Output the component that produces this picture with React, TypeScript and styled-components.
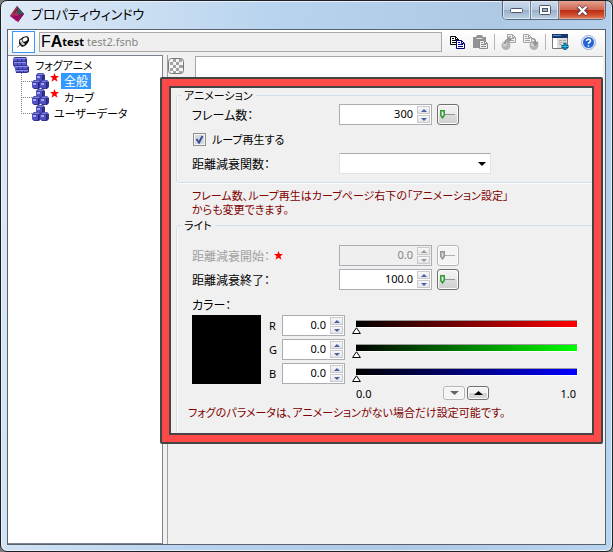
import React from "react";
import styled, { createGlobalStyle, css } from "styled-components";

const GlobalStyle = createGlobalStyle`
  *, *::before, *::after { box-sizing: border-box; }
  html, body { margin: 0; background: #7d7d7d; }
  body, button, input, select {
    font-family: "Noto Sans", "Noto Sans CJK JP", sans-serif;
    font-size: 12px;
    line-height: 16px;
    color: #000;
  }
  body { font-family: "Noto Sans CJK JP", sans-serif; font-feature-settings: "palt"; }
  button { padding: 0; cursor: default; }
  svg { display: block; flex: none; }
`;

const Window = styled.div`
  display: flex;
  flex-direction: column;
  min-height: 100vh;
  padding: 0 6px 6px;
  border: 1px solid #1c1f24;
  border-radius: 7px;
  background: linear-gradient(100deg, #dfeaf7 0, #b7d3ee 40%, #adc9e4 70%, #b9d4ee 100%);
  box-shadow: inset 0 0 0 1px #e6f1fb;
`;

const TitleBar = styled.header`
  display: flex;
  align-items: flex-start;
  height: 28px;
`;

const Title = styled.h1`
  display: flex;
  align-items: center;
  gap: 6px;
  flex: 1;
  margin: 0;
  padding-left: 2px;
  height: 26px;
  font-size: 13px;
  font-weight: 400;
  white-space: nowrap;
`;

const Caption = styled.div`
  display: flex;
  border: 1px solid #56667c;
  border-top: 0;
  border-radius: 0 0 5px 5px;
  overflow: hidden;
`;

const CaptionButton = styled.button<{ $close?: boolean }>`
  display: grid;
  place-items: center;
  width: ${(p) => (p.$close ? 46 : 28)}px;
  height: 18px;
  border: 0;
  border-right: ${(p) => (p.$close ? "0" : "1px solid #6d7d92")};
  box-shadow: inset 0 0 0 1px ${(p) => (p.$close ? "#e7a392" : "#dbe7f3")};
  background: ${(p) =>
    p.$close
      ? "linear-gradient(#e3a191 0, #cf6650 48%, #b92a14 50%, #d0512f 80%, #e08564 100%)"
      : "linear-gradient(#cddcec 0, #b5c8dd 48%, #98afc8 50%, #bdd2e6 100%)"};
`;

const Client = styled.main`
  display: flex;
  flex-direction: column;
  flex: 1;
  border: 1px solid #59616c;
  background: #f0f0f0;
`;

const Toolbar = styled.div`
  display: flex;
  align-items: center;
  gap: 6px;
  height: 25px;
  padding: 0 9px 1px 4px;
  background: linear-gradient(#ffffff, #efefef);
`;

const ToolButton = styled.button`
  display: grid;
  place-items: center;
  width: 16px;
  height: 20px;
  border: 0;
  background: none;
`;

const HelpButton = styled(ToolButton)`
  margin-left: 6px;
`;

const PinButton = styled(ToolButton)`
  width: 23px;
  height: 22px;
  border: 1px solid #3399ff;
  background: #fff;
`;

const PathField = styled.div`
  display: flex;
  align-items: center;
  flex: 1;
  min-width: 0;
  height: 20px;
  margin: 0 2px 0 -2px;
  padding-left: 1px;
  border: 1px solid #a9a9a9;
  background: #efefef;
  font-family: "Noto Sans", sans-serif;
  font-size: 11px;
  color: #858585;
  white-space: nowrap;

  strong { margin-right: 3px; color: #000; }
`;

const FileMark = styled.span`
  font-family: "Liberation Sans", sans-serif;
  font-size: 16px;
  line-height: 18px;
  color: #000;
`;

const Separator = styled.span`
  width: 1px;
  height: 16px;
  background: #b5b5b5;
`;

const Body = styled.div`
  display: grid;
  grid-template-columns: 155px minmax(0, 1fr);
  gap: 4px;
  flex: 1;
`;

const Tree = styled.nav`
  padding: 1px 0 0 5px;
  border: solid #7c8490;
  border-width: 1px 1px 1px 0;
  background: #fff;

  ul { margin: 0; padding: 0; list-style: none; }
`;

const TreeItem = styled.a`
  display: flex;
  align-items: center;
  height: 16px;
  color: #000;
  text-decoration: none;
  white-space: nowrap;
`;

const TreeChildren = styled.ul`
  && { padding-left: 8px; }

  li {
    display: flex;
    align-items: center;
  }
  li::before {
    content: "";
    align-self: flex-start;
    width: 11px;
    height: 9px;
    border: dotted #808080;
    border-width: 0 0 1px 1px;
  }
  li:not(:last-child) {
    background: linear-gradient(#808080 50%, #fff 50%) 0 0 / 1px 2px repeat-y;
  }
`;

const StarSlot = styled.span`
  align-self: flex-start;
  padding-left: 1px;
`;

const TreeLabel = styled.span<{ $selected?: boolean }>`
  margin-left: 2px;
  padding: 0 3px;
  font-size: 11px;
  ${(p) =>
    p.$selected &&
    css`
      background: #3399ff;
      color: #fff;
      font-size: 12px;
    `}
`;

const Pane = styled.section`
  min-width: 0;
  border-left: 1px solid #a0a0a0;
`;

const PaneHeader = styled.div`
  display: flex;
  align-items: center;
  gap: 11px;
  height: 22px;
  padding-right: 2px;
`;

const HeaderStrip = styled.div`
  align-self: stretch;
  flex: 1;
  margin-top: 1px;
  border: solid #a5a7aa;
  border-width: 1px 0 0 1px;
  background: #fff;
`;

const Page = styled.form`
  position: relative;
  padding: 10px 7px 6px 8px;
`;

const Highlight = styled.div`
  position: absolute;
  inset: 0 2px 0 -8px;
  border: 2px solid #444444;
  border-radius: 2px;
  pointer-events: none;

  &::before, &::after { content: ""; position: absolute; }
  &::before { inset: 0; border: 7px solid rgba(255, 64, 64, 0.95); }
  &::after { inset: 7px; border: 2px solid #444444; }
`;

const Group = styled.fieldset<{ $top: number; $gap: number; $bottom: number }>`
  display: flex;
  flex-direction: column;
  gap: ${(p) => p.$gap}px;
  min-width: 0;
  margin: 0;
  padding: ${(p) => p.$top}px 15px ${(p) => p.$bottom}px;
  border: 1px solid #d3dee6;
  border-radius: 3px;
  box-shadow: inset 1px 0 #fafcfd, 0 1px #fafcfd;

  legend { margin-left: -11px; padding: 0 3px; height: 16px; font-size: 11px; }
`;

const Row = styled.div`
  display: grid;
  grid-template-columns: 147px auto 1fr;
  align-items: center;
  min-height: 21px;
`;

const RowLabel = styled.label<{ $muted?: boolean }>`
  display: flex;
  align-items: center;
  gap: 4px;
  color: ${(p) => (p.$muted ? "#a0a0a0" : "#000")};
`;

const CheckLabel = styled.label`
  display: flex;
  align-items: center;
  gap: 6px;
  height: 16px;
  padding-left: 1px;
  font-size: 11px;
`;

const CheckBox = styled.input`
  appearance: none;
  width: 13px;
  height: 13px;
  margin: 0;
  border: 1px solid #8e8f8f;
  box-shadow: inset 0 0 0 1px #f4f4f4;
  background: #d3d8e0;

  &:checked {
    background: url("data:image/svg+xml,%3Csvg xmlns='http://www.w3.org/2000/svg' viewBox='0 0 11 11'%3E%3Cpath d='M2.5 5l2.500 3.500L8.500 2' fill='none' stroke='%233a4f94' stroke-width='2'/%3E%3C/svg%3E")
      center / 11px 11px no-repeat #d3d8e0;
  }
`;

const SpinBox = styled.span<{ $width: number; $muted?: boolean }>`
  display: flex;
  width: ${(p) => p.$width}px;
  height: 21px;
  padding: 1px;
  border: 1px solid #abadb3;
  background: ${(p) => (p.$muted ? "#efefef" : "#fff")};

  input {
    flex: 1;
    min-width: 0;
    padding: 0 4px 1px 0;
    border: 0;
    background: none;
    text-align: right;
    font-size: 11px;
    color: ${(p) => (p.$muted ? "#858585" : "#000")};
  }
`;

const SpinButtons = styled.span`
  display: grid;
  grid-template-rows: 1fr 1fr;
  gap: 1px;
  width: 13px;
`;

const SpinButton = styled.button`
  display: grid;
  place-items: center;
  border: 1px solid #c9cace;
  background: linear-gradient(#f8f8f8, #e4e4e4);
`;

const KeyButton = styled.button`
  display: grid;
  place-items: center start;
  width: 22px;
  height: 21px;
  margin-left: 5px;
  padding-left: 2px;
  border: 1px solid #707070;
  border-radius: 3px;
  box-shadow: inset 0 0 0 1px #fbfbfb;
  background: linear-gradient(#f2f2f2 0, #ebebeb 50%, #dddddd 50%, #cfcfcf 100%);

  &:disabled { border-color: #b4b7b9; background: #f4f4f4; }
`;

const Combo = styled.select`
  appearance: none;
  width: 152px;
  height: 21px;
  border: 1px solid #e2e3ea;
  border-top-color: #abadb3;
  border-radius: 1px;
  background: url("data:image/svg+xml,%3Csvg xmlns='http://www.w3.org/2000/svg' viewBox='0 0 8 4'%3E%3Cpath d='M0 0h8L4 4z'/%3E%3C/svg%3E")
    right 4px center / 8px 4px no-repeat #fff;
`;

const Note = styled.p<{ $inset: number; $top: number }>`
  margin: ${(p) => p.$top}px 0 1px ${(p) => p.$inset}px;
  font-size: 11px;
  line-height: 14px;
  color: #800000;
`;

const ColorHeading = styled.div`
  height: 16px;
  margin-top: 4px;
`;

const ColorEditor = styled.div`
  display: grid;
  grid-template-columns: 69px minmax(0, 1fr);
  column-gap: 8px;
  margin-top: -1px;
`;

const Swatch = styled.button`
  width: 69px;
  height: 69px;
  border: 0;
  background: #000;
`;

const Channels = styled.div`
  display: grid;
  gap: 3px;
`;

const Channel = styled.div`
  display: grid;
  grid-template-columns: 13px 63px minmax(0, 1fr);
  height: 21px;

  label { font-family: "Noto Sans", sans-serif; font-size: 11px; line-height: 22px; }
`;

const Slider = styled.input<{ $color: string }>`
  appearance: none;
  height: 21px;
  margin: 0 0 0 7px;
  background:
    linear-gradient(#9b9b9b, #9b9b9b) 4px 5px / calc(100% - 9px) 1px no-repeat,
    linear-gradient(90deg, #000, ${(p) => p.$color}) 4px 6px / calc(100% - 9px) 6px no-repeat,
    linear-gradient(#fff, #fff) 4px 6px / calc(100% - 8px) 7px no-repeat;

  &::-webkit-slider-runnable-track { height: 21px; padding-top: 12px; }
  &::-webkit-slider-thumb {
    appearance: none;
    width: 9px;
    height: 7px;
    background: url("data:image/svg+xml,%3Csvg xmlns='http://www.w3.org/2000/svg' viewBox='0 0 9 7'%3E%3Cpath d='M4.5 .8L8.4 6.5H.6z' fill='%23fff' stroke='%23000'/%3E%3C/svg%3E") no-repeat;
  }
`;

const Scale = styled.div`
  display: flex;
  align-items: center;
  justify-content: space-between;
  grid-column: 2;
  min-height: 17px;
  margin: 1px 6px 0 87px;
`;

const RangeButtons = styled.span`
  display: flex;
  gap: 2px;
  margin-bottom: 2px;
`;

const RangeButton = styled.button`
  display: grid;
  place-items: center;
  width: 22px;
  height: 14px;
  border: 1px solid #707070;
  border-radius: 3px;
  box-shadow: inset 0 0 0 1px #fbfbfb;
  background: linear-gradient(#f2f2f2 50%, #d5d5d5 50%);

  &:disabled { border-color: #b4b7b9; background: #f4f4f4; }
`;

const ScaleText = styled.span`
  font-family: "Noto Sans", sans-serif;
  font-size: 11px;
`;

function Star() {
  return (
    <svg width="9" height="9" viewBox="0 0 9 9">
      <path d="M4.5 0L5.7 3H9L6.4 5.2 7.5 8.8 4.5 6.8 1.5 8.8 2.6 5.2 0 3h3.3z" fill="#ff0000" />
    </svg>
  );
}

function TreeStar() {
  return <StarSlot><Star /></StarSlot>;
}

function Arrow({ up, width = 6, color = "#4a5fa5" }: { up?: boolean; width?: number; color?: string }) {
  return (
    <svg width={width} height={Math.floor(width / 2)} viewBox="0 0 6 3" preserveAspectRatio="none">
      <path d={up ? "M3 0L6 3H0z" : "M0 0H6L3 3z"} fill={color} />
    </svg>
  );
}

const cubeSpots = [
  [4, 0],
  [0, 7],
  [8, 7],
];

function CubesIcon() {
  return (
    <svg width="17" height="16" viewBox="0 0 17 16">
      {cubeSpots.map(([x, y]) => (
        <g key={`${x}-${y}`} transform={`translate(${x} ${y})`}>
          <path d="M0 2L2 0H7L9 2V7L7 9H2L0 7z" fill="#34348f" />
          <path d="M0 2.500H6V8H2L0 7z" fill="#4f4fc6" />
          <path d="M1 2L3 .5H7L7.500 2z" fill="#7c7cdf" />
          <path d="M1 3H4V5H1z" fill="#a3a3fa" />
          <path d="M6 3H7V8H6z" fill="#232370" />
        </g>
      ))}
    </svg>
  );
}

function StackIcon() {
  return (
    <svg width="17" height="16" viewBox="0 0 17 16">
      <path d="M0 1L2 0H13L14 2V8L16 10V15L14 16H3L2 11 0 8z" fill="#34348f" />
      <path d="M0 1H13V2H0zM1 5H13V6H1zM2 9H15V10H2zM3 13H15V14H3z" fill="#8f8fee" />
      <path d="M0 2H4V4H0zM5 2H8V4H5zM9 2H12V4H9zM1 6H4V8H1zM5 6H8V8H5zM9 6H13V8H9zM2 10H5V12H2zM6 10H9V12H6zM10 10H14V12H10zM3 14H6V15H3zM7 14H10V15H7zM11 14H14V15H11z" fill="#5858d0" />
    </svg>
  );
}

function AppIcon() {
  return (
    <svg width="16" height="17" viewBox="0 0 16 17">
      <path d="M8 0L15 8 9 16 1 10z" fill="#5d1038" />
      <path d="M8 0L9 9 1 10z" fill="#a33a4c" />
      <path d="M8 0L15 8 9 9z" fill="#355763" />
      <path d="M1 10L9 9 9 16z" fill="#e1159e" />
      <path d="M9 9L15 8 9 16z" fill="#9a0c5c" />
      <path d="M3 10L9 14M5 9.700L9 12M9 10L4 12M9 13L6 14M8 3L5 8" stroke="#4b062f" strokeWidth=".7" />
    </svg>
  );
}

function PinIcon() {
  return (
    <svg width="13" height="12" viewBox="0 0 13 12">
      <path d="M0 11.500L3 9" stroke="#888" />
      <path d="M2 4L6 1 10 0 12 2V5L10 8 8 10 5 11 2 8z" fill="#111" />
      <path d="M2.500 4.500L4.500 3.500 5.500 6 8 8 7 9.200 4.500 8.500z" fill="#e8e8e8" />
      <ellipse cx="8" cy="3.500" rx="2.700" ry="2" fill="#fff" transform="rotate(-25 8 3.500)" />
      <path d="M3 5.500L6 8.500" stroke="#999" />
    </svg>
  );
}

function Sheet({ x, y, stroke, fill = "#fff" }: { x: number; y: number; stroke: string; fill?: string }) {
  return (
    <g transform={`translate(${x} ${y})`} stroke={stroke}>
      <path d="M.5 .5H5.500L8.500 3.500V8.500H.5z" fill={fill} />
      <path d="M5.500 .5V3.500H8.500M2 2.500H4M2 4.500H7M2 6.500H7" fill="none" />
    </g>
  );
}

function CopyIcon() {
  return (
    <svg width="16" height="13" viewBox="0 0 16 13">
      <Sheet x={0} y={0} stroke="#000" />
      <Sheet x={6} y={4} stroke="#000080" />
    </svg>
  );
}

function PasteIcon() {
  return (
    <svg width="17" height="15" viewBox="0 0 17 15">
      <path d="M1 2H4L5 0H10L11 2H14V13H1z" fill="#929292" />
      <path d="M4.500 3.500H10.500" stroke="#ddd" />
      <Sheet x={7} y={5} stroke="#8a8a8a" fill="#eee" />
    </svg>
  );
}

function TransferIcon({ into }: { into?: boolean }) {
  return (
    <svg width="16" height="17" viewBox="0 0 16 17">
      <Sheet x={into ? 0 : 6} y={0} stroke="#a4a4a4" fill="#f0f0f0" />
      <circle cx={into ? 11 : 5} cy="11.500" r="4.500" fill="#b4b4b4" />
      <circle cx={into ? 10 : 4} cy="10.500" r="2" fill="#d0d0d0" />
      <path
        d={into ? "M9 4.500C12 4.500 12.500 6 12.500 10M10 8L12.500 11 15 8" : "M4 10C4 6 5 5.500 9 5.500M7 3L9.500 5.500 7 8"}
        fill="none"
        stroke="#929292"
        strokeWidth="1.600"
      />
    </svg>
  );
}

function WindowAddIcon() {
  return (
    <svg width="17" height="16" viewBox="0 0 17 16">
      <path d="M.5 .5H15.500V14.500H.5z" fill="#dedede" stroke="#777" />
      <path d="M0 0H16V4H0z" fill="#17376f" />
      <path d="M1 1H9V2H1z" fill="#5791cf" />
      <path d="M1 4H5V14H1z" fill="#fff" />
      <path d="M7 6.500H10M7 8.500H10M7 10.500H10M11 6.500H14M11 8.500H14" stroke="#aaa" />
      <path d="M13 9V16M9.500 12.500H16.500" stroke="#074f80" strokeWidth="3" />
      <path d="M13 9.500V15.500M10 12.500H16" stroke="#20c8f4" />
    </svg>
  );
}

function HelpIcon() {
  return (
    <svg width="15" height="15" viewBox="0 0 15 15">
      <circle cx="7.500" cy="7.500" r="7" fill="#e9eef9" stroke="#9aaad0" />
      <circle cx="7.500" cy="7.500" r="5.500" fill="#2463d5" />
      <path d="M5.500 6C5.500 3.500 9.600 3.500 9.500 6 9.400 7.300 7.500 7 7.500 9M7.500 10.200V11.700" fill="none" stroke="#fff" strokeWidth="1.500" />
    </svg>
  );
}

function KeyIcon({ muted }: { muted?: boolean }) {
  return (
    <svg width="15" height="9" viewBox="0 0 15 9">
      <path d="M5 4.500H15" stroke={muted ? "#b0b0b0" : "#949494"} />
      <path d="M.8 .8H4.200V5.500L2.500 7.800 .8 5.500z" fill={muted ? "#ddd" : "#e4f0e4"} stroke={muted ? "#929292" : "#2f9a2f"} strokeWidth="1.500" />
    </svg>
  );
}

function CheckerIcon() {
  return (
    <svg width="16" height="16" viewBox="0 0 16 16">
      <rect x=".5" y=".5" width="15" height="15" rx="3" fill="#f5f5f5" stroke="#777" />
      <path d="M5 1H8V4H5zM11 1H14V4H11zM2 4H5V7H2zM8 4H11V7H8zM5 7H8V10H5zM11 7H15V10H11zM2 10H5V13H2zM8 10H11V13H8zM5 13H8V15H5zM11 13H14V15H11z" fill="#a2a2a2" />
    </svg>
  );
}

function Spinner({ id, value, width = 93, muted }: { id: string; value: string; width?: number; muted?: boolean }) {
  const color = muted ? "#999" : undefined;
  return (
    <SpinBox $width={width} $muted={muted}>
      <input id={id} defaultValue={value} disabled={muted} />
      <SpinButtons>
        <SpinButton type="button" aria-label="増やす" disabled={muted}><Arrow up color={color} /></SpinButton>
        <SpinButton type="button" aria-label="減らす" disabled={muted}><Arrow color={color} /></SpinButton>
      </SpinButtons>
    </SpinBox>
  );
}

const channels = [
  { name: "R", color: "#ff0000" },
  { name: "G", color: "#00ff00" },
  { name: "B", color: "#0000ff" },
];

export default function App() {
  return (
    <>
      <GlobalStyle />
      <Window>
        <TitleBar>
          <Title><AppIcon />プロパティウィンドウ</Title>
          <Caption>
            <CaptionButton aria-label="最小化">
              <svg width="13" height="6" viewBox="0 0 13 6"><rect x=".5" y="1.500" width="12" height="4" rx="1" fill="#fff" stroke="#4c5666" /></svg>
            </CaptionButton>
            <CaptionButton aria-label="最大化">
              <svg width="12" height="10" viewBox="0 0 12 10">
                <rect x=".5" y=".5" width="11" height="9" rx="1" fill="#fff" stroke="#4c5666" />
                <rect x="3.500" y="3.500" width="5" height="3" fill="#9fb2c9" stroke="#4c5666" />
              </svg>
            </CaptionButton>
            <CaptionButton $close aria-label="閉じる">
              <svg width="13" height="11" viewBox="0 0 13 11">
                <path d="M2 1.500L11 9.500M11 1.500L2 9.500" stroke="#5a3a40" strokeWidth="4" />
                <path d="M2.500 1.500L10.500 9.500M10.500 1.500L2.500 9.500" stroke="#fff" strokeWidth="2.400" />
              </svg>
            </CaptionButton>
          </Caption>
        </TitleBar>
        <Client>
          <Toolbar>
            <PinButton aria-label="固定"><PinIcon /></PinButton>
            <PathField>
              <FileMark>F<b>A</b></FileMark>
              <strong>test</strong>test2.fsnb
            </PathField>
            <ToolButton aria-label="コピー"><CopyIcon /></ToolButton>
            <ToolButton aria-label="貼り付け" disabled><PasteIcon /></ToolButton>
            <Separator />
            <ToolButton aria-label="書き出し" disabled><TransferIcon /></ToolButton>
            <ToolButton aria-label="読み込み" disabled><TransferIcon into /></ToolButton>
            <Separator />
            <ToolButton aria-label="ウィンドウを追加"><WindowAddIcon /></ToolButton>
            <HelpButton aria-label="ヘルプ"><HelpIcon /></HelpButton>
          </Toolbar>
          <Body>
            <Tree>
              <ul>
                <li>
                  <TreeItem href="#fog"><StackIcon /><TreeLabel>フォグアニメ</TreeLabel></TreeItem>
                  <TreeChildren>
                    <li><TreeItem href="#general"><CubesIcon /><TreeStar /><TreeLabel $selected>全般</TreeLabel></TreeItem></li>
                    <li><TreeItem href="#curve"><CubesIcon /><TreeStar /><TreeLabel>カーブ</TreeLabel></TreeItem></li>
                    <li><TreeItem href="#user"><CubesIcon /><TreeLabel>ユーザーデータ</TreeLabel></TreeItem></li>
                  </TreeChildren>
                </li>
              </ul>
            </Tree>
            <Pane>
              <PaneHeader><CheckerIcon /><HeaderStrip /></PaneHeader>
              <Page>
                <Group $top={1} $gap={6} $bottom={8}>
                  <legend>アニメーション</legend>
                  <Row>
                    <RowLabel htmlFor="frames">フレーム数：</RowLabel>
                    <Spinner id="frames" value="300" />
                    <KeyButton type="button" aria-label="フレーム数のキー"><KeyIcon /></KeyButton>
                  </Row>
                  <CheckLabel><CheckBox type="checkbox" defaultChecked />ループ再生する</CheckLabel>
                  <Row>
                    <RowLabel htmlFor="falloff">距離減衰関数：</RowLabel>
                    <Combo id="falloff" defaultValue=""><option value="" /></Combo>
                  </Row>
                </Group>
                <Note $inset={16} $top={5}>
                  フレーム数、ループ再生はカーブページ右下の「アニメーション設定」<br />からも変更できます。
                </Note>
                <Group $top={12} $gap={3} $bottom={17}>
                  <legend>ライト</legend>
                  <Row>
                    <RowLabel htmlFor="start" $muted>距離減衰開始：<Star /></RowLabel>
                    <Spinner id="start" value="0.0" muted />
                    <KeyButton type="button" aria-label="距離減衰開始のキー" disabled><KeyIcon muted /></KeyButton>
                  </Row>
                  <Row>
                    <RowLabel htmlFor="end">距離減衰終了：</RowLabel>
                    <Spinner id="end" value="100.0" />
                    <KeyButton type="button" aria-label="距離減衰終了のキー"><KeyIcon /></KeyButton>
                  </Row>
                  <ColorHeading>カラー：</ColorHeading>
                  <ColorEditor>
                    <Swatch type="button" aria-label="カラー" />
                    <Channels>
                      {channels.map(({ name, color }) => (
                        <Channel key={name}>
                          <label htmlFor={`value-${name}`}>{name}</label>
                          <Spinner id={`value-${name}`} value="0.0" width={63} />
                          <Slider type="range" min="0" max="1" step="0.01" defaultValue="0" aria-label={name} $color={color} />
                        </Channel>
                      ))}
                    </Channels>
                    <Scale>
                      <ScaleText>0.0</ScaleText>
                      <RangeButtons>
                        <RangeButton type="button" aria-label="範囲を縮める" disabled><Arrow width={9} color="#666" /></RangeButton>
                        <RangeButton type="button" aria-label="範囲を広げる"><Arrow up width={9} color="#000" /></RangeButton>
                      </RangeButtons>
                      <ScaleText>1.0</ScaleText>
                    </Scale>
                  </ColorEditor>
                  <Note $inset={-4} $top={0}>フォグのパラメータは、アニメーションがない場合だけ設定可能です。</Note>
                </Group>
                <Highlight />
              </Page>
            </Pane>
          </Body>
        </Client>
      </Window>
    </>
  );
}
